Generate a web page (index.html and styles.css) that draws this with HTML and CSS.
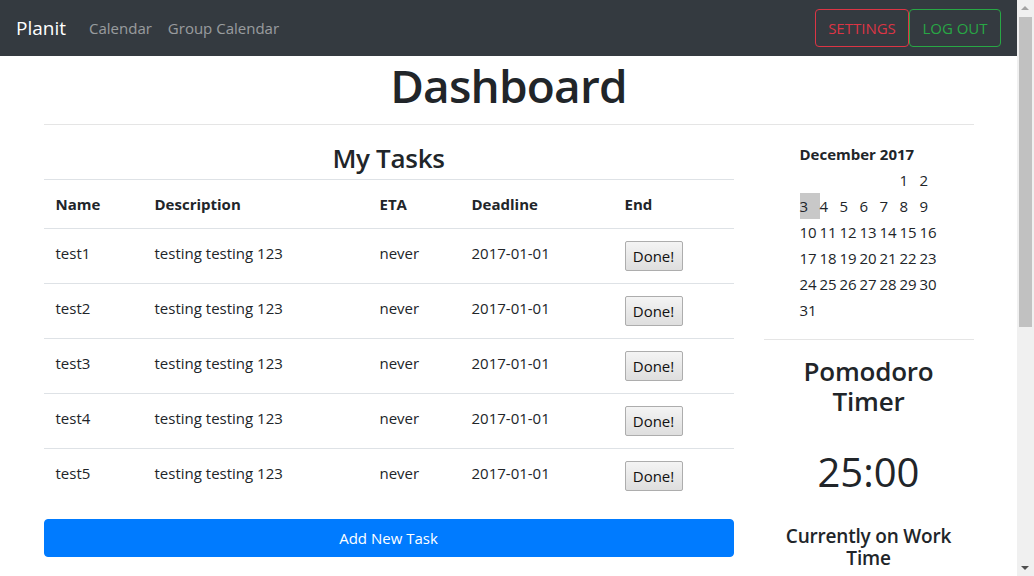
FILE: index.html
```html
<!DOCTYPE html>
<html lang="en">
<head>
<meta charset="utf-8">
<title>Planit - Dashboard</title>
<link rel="stylesheet" href="styles.css">
</head>
<body>
<div class="viewport">
  <nav class="navbar">
    <div class="nav-left">
      <a class="brand" href="#">Planit</a>
      <a class="nav-link" href="#">Calendar</a>
      <a class="nav-link" href="#">Group Calendar</a>
    </div>
    <div class="nav-right">
      <button class="btn-outline danger">SETTINGS</button>
      <button class="btn-outline success">LOG OUT</button>
    </div>
  </nav>
  <div class="container">
    <h1 class="page-title">Dashboard</h1>
    <hr class="rule">
    <div class="row">
      <div class="col-main">
        <h2 class="section-title">My Tasks</h2>
        <table class="tasks">
          <thead>
            <tr><th class="c1">Name</th><th class="c2">Description</th><th class="c3">ETA</th><th class="c4">Deadline</th><th class="c5">End</th></tr>
          </thead>
          <tbody>
            <tr><td>test1</td><td>testing testing 123</td><td>never</td><td>2017-01-01</td><td><button class="done">Done!</button></td></tr>
            <tr><td>test2</td><td>testing testing 123</td><td>never</td><td>2017-01-01</td><td><button class="done">Done!</button></td></tr>
            <tr><td>test3</td><td>testing testing 123</td><td>never</td><td>2017-01-01</td><td><button class="done">Done!</button></td></tr>
            <tr><td>test4</td><td>testing testing 123</td><td>never</td><td>2017-01-01</td><td><button class="done">Done!</button></td></tr>
            <tr><td>test5</td><td>testing testing 123</td><td>never</td><td>2017-01-01</td><td><button class="done">Done!</button></td></tr>
          </tbody>
        </table>
        <button class="btn-primary">Add New Task</button>
      </div>
      <div class="col-side">
        <table class="cal">
          <thead><tr><th colspan="7">December 2017</th></tr></thead>
          <tbody>
            <tr><td></td><td></td><td></td><td></td><td></td><td>1</td><td>2</td></tr>
            <tr><td class="today">3</td><td>4</td><td>5</td><td>6</td><td>7</td><td>8</td><td>9</td></tr>
            <tr><td>10</td><td>11</td><td>12</td><td>13</td><td>14</td><td>15</td><td>16</td></tr>
            <tr><td>17</td><td>18</td><td>19</td><td>20</td><td>21</td><td>22</td><td>23</td></tr>
            <tr><td>24</td><td>25</td><td>26</td><td>27</td><td>28</td><td>29</td><td>30</td></tr>
            <tr><td>31</td><td></td><td></td><td></td><td></td><td></td><td></td></tr>
          </tbody>
        </table>
        <hr class="rule side-rule">
        <h3 class="pomo-title">Pomodoro Timer</h3>
        <div class="timer">25:00</div>
        <h5 class="status">Currently on Work Time</h5>
      </div>
    </div>
  </div>
</div>
<div class="scrollbar">
  <div class="arrow up"></div>
  <div class="thumb"></div>
  <div class="arrow down"></div>
</div>
</body>
</html>
```

FILE: styles.css
```css
* { box-sizing: border-box; }
html, body { margin: 0; padding: 0; height: 100%; overflow: hidden; }
body {
  font-family: "Open Sans", "Noto Sans", sans-serif;
  font-size: 15px;
  line-height: 1.5;
  color: #212529;
  background: #fff;
}
.viewport { width: 1017px; }

.navbar {
  height: 56px;
  background: #343a40;
  display: flex;
  align-items: center;
  justify-content: space-between;
  padding: 0 16px;
}
.nav-left { display: flex; align-items: center; }
.brand { color: #fff; font-size: 19px; text-decoration: none; margin-right: 15px; }
.nav-link { color: rgba(255,255,255,.5); text-decoration: none; font-size: 15px; padding: 0 8px; }
.nav-right { display: flex; }
.btn-outline {
  background: transparent;
  font-family: inherit;
  font-size: 15px;
  height: 38px;
  padding: 0 11px;
  border: 1px solid;
  border-radius: 4px;
}
.btn-outline.danger { color: #dc3545; border-color: #dc3545; width: 94px; }
.btn-outline.success { color: #28a745; border-color: #28a745; width: 92px; }

.container { width: 960px; margin: 0 auto; padding: 0 15px; }
.page-title {
  margin: 0;
  text-align: center;
  font-weight: 600;
  font-size: 46px;
  line-height: 58px;
  letter-spacing: -0.8px;
}
.rule { border: 0; border-top: 1px solid rgba(0,0,0,.1); margin: 10px 0 0; }
.row { display: flex; }
.col-main { width: 690px; }
.col-side { width: 210px; margin-left: 30px; }

.section-title {
  margin: 12px 0 0;
  text-align: center;
  font-size: 26px;
  font-weight: 600;
  line-height: 42px;
  letter-spacing: -0.3px;
}
.tasks { width: 100%; border-collapse: collapse; margin-bottom: 16px; }
.tasks th, .tasks td {
  padding: 12px;
  text-align: left;
  vertical-align: top;
  line-height: 24px;
  border-top: 1px solid #dee2e6;
}
.tasks th { font-weight: 700; border-bottom: 1px solid #dee2e6; border-top: 1px solid #dee2e6; }
.tasks tbody tr:first-child td { border-top: 0; }
.c1 { width: 99px; }
.c2 { width: 225px; }
.c3 { width: 92px; }
.c4 { width: 153px; }
.done {
  display: block;
  font-family: inherit;
  font-size: 15px;
  height: 30px;
  width: 58px;
  padding: 0;
  color: #111;
  background: linear-gradient(#f4f4f4, #dedede);
  border: 1px solid #adadad;
  border-radius: 2px;
}
.btn-primary {
  display: block;
  width: 100%;
  height: 38px;
  background: #007bff;
  color: #fff;
  border: 1px solid #007bff;
  border-radius: 4px;
  font-family: inherit;
  font-size: 15px;
}

.cal { margin: 16px 0 0 36px; border-collapse: collapse; }
.cal th { text-align: left; font-weight: 700; height: 26px; padding: 0; }
.cal td { width: 20px; height: 26px; padding: 0; text-align: left; vertical-align: middle; }
.cal td.today { background: #c8c8c8; }
.side-rule { margin-top: 16px; }
.pomo-title {
  margin: 16px 0 0;
  padding: 0 12px;
  text-align: center;
  font-size: 26px;
  font-weight: 600;
  line-height: 30px;
  letter-spacing: -0.2px;
}
.timer {
  text-align: center;
  font-size: 40px;
  font-weight: 500;
  line-height: 48px;
  margin-top: 32px;
}
.status {
  margin: 29px 0 0;
  text-align: center;
  font-size: 19px;
  font-weight: 600;
  line-height: 22px;
  letter-spacing: -0.2px;
}

.scrollbar {
  position: fixed;
  top: 0;
  right: 0;
  width: 17px;
  height: 100%;
  background: #f0f0f0;
}
.thumb { position: absolute; left: 2px; right: 2px; top: 17px; height: 310px; background: #c1c1c1; }
.arrow { position: absolute; left: 4px; width: 0; height: 0; border-left: 4px solid transparent; border-right: 4px solid transparent; }
.arrow.up { top: 6px; border-bottom: 4px solid #a3a3a3; }
.arrow.down { bottom: 6px; border-top: 4px solid #505050; }
```
